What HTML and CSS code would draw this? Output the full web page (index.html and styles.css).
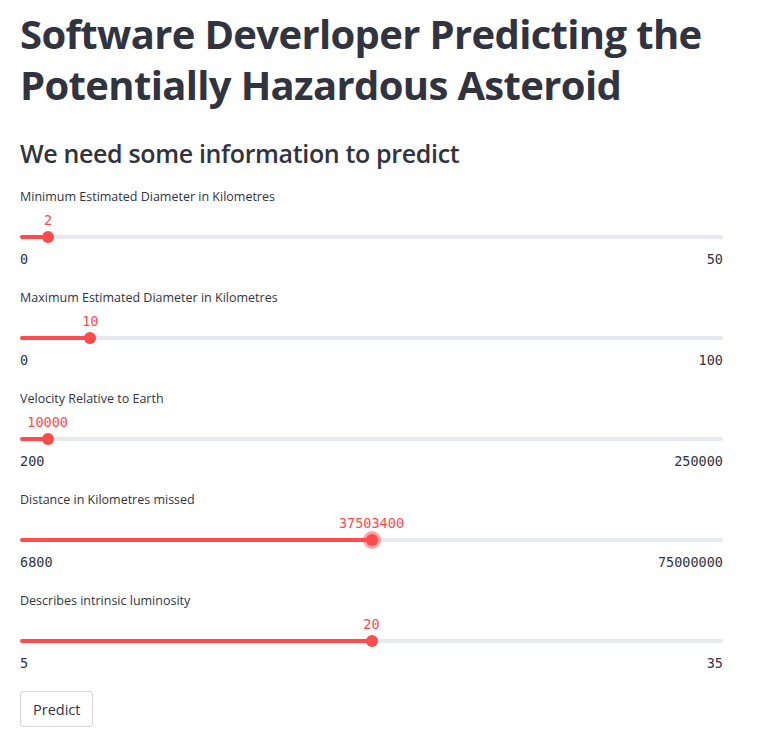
FILE: index.html
```html
<!DOCTYPE html>
<html lang="en">
<head>
<meta charset="utf-8">
<title>Hazardous Asteroid</title>
<link rel="stylesheet" href="styles.css">
</head>
<body>
<main class="main">
  <h1 class="title">Software Deverloper Predicting the Potentially Hazardous Asteroid</h1>
  <h2 class="subtitle">We need some information to predict</h2>

  <div class="fields">
    <div class="field">
      <div class="label">Minimum Estimated Diameter in Kilometres</div>
      <div class="value-row"><span class="value" style="left: 4%">2</span></div>
      <div class="track-row">
        <div class="track"><div class="fill" style="width: 4%"></div><span class="thumb" style="left: 4%"></span></div>
      </div>
      <div class="ticks"><span>0</span><span>50</span></div>
    </div>

    <div class="field">
      <div class="label">Maximum Estimated Diameter in Kilometres</div>
      <div class="value-row"><span class="value" style="left: 10%">10</span></div>
      <div class="track-row">
        <div class="track"><div class="fill" style="width: 10%"></div><span class="thumb" style="left: 10%"></span></div>
      </div>
      <div class="ticks"><span>0</span><span>100</span></div>
    </div>

    <div class="field">
      <div class="label">Velocity Relative to Earth</div>
      <div class="value-row"><span class="value" style="left: 3.923%">10000</span></div>
      <div class="track-row">
        <div class="track"><div class="fill" style="width: 3.923%"></div><span class="thumb" style="left: 3.923%"></span></div>
      </div>
      <div class="ticks"><span>200</span><span>250000</span></div>
    </div>

    <div class="field">
      <div class="label">Distance in Kilometres missed</div>
      <div class="value-row"><span class="value" style="left: 50%">37503400</span></div>
      <div class="track-row">
        <div class="track"><div class="fill" style="width: 50%"></div><span class="thumb thumb-focus" style="left: 50%"></span></div>
      </div>
      <div class="ticks"><span>6800</span><span>75000000</span></div>
    </div>

    <div class="field">
      <div class="label">Describes intrinsic luminosity</div>
      <div class="value-row"><span class="value" style="left: 50%">20</span></div>
      <div class="track-row">
        <div class="track"><div class="fill" style="width: 50%"></div><span class="thumb" style="left: 50%"></span></div>
      </div>
      <div class="ticks"><span>5</span><span>35</span></div>
    </div>

    <div class="actions">
      <button class="btn" type="button">Predict</button>
    </div>
  </div>
</main>
</body>
</html>
```

FILE: styles.css
```css
* { box-sizing: border-box; }

html, body {
  margin: 0;
  padding: 0;
  background: #ffffff;
}

body {
  font-family: "Open Sans", "Liberation Sans", sans-serif;
  color: #31333f;
}

.main {
  width: 743px;
  padding: 8px 20px 0 20px;
}

.title {
  margin: 0;
  font-size: 40px;
  line-height: 51px;
  font-weight: 700;
  letter-spacing: -0.65px;
}

.subtitle {
  margin: 26px 0 17px 0;
  font-size: 25px;
  line-height: 34px;
  font-weight: 600;
  letter-spacing: -0.35px;
}

.fields {
  display: flex;
  flex-direction: column;
  gap: 11px;
}

.field {
  display: flex;
  flex-direction: column;
}

.label {
  font-size: 12.5px;
  line-height: 20px;
  height: 20px;
}

.value-row {
  position: relative;
  height: 26px;
}

.value {
  position: absolute;
  top: 0;
  transform: translateX(-50%);
  font-family: "DejaVu Sans Mono", "Liberation Mono", monospace;
  font-size: 13.5px;
  line-height: 26px;
  color: #ff4b4b;
  white-space: nowrap;
}

.track-row {
  height: 8px;
  display: flex;
  align-items: center;
}

.track {
  position: relative;
  width: 100%;
  height: 4px;
  border-radius: 2px;
  background: #e6e9ef;
}

.fill {
  height: 4px;
  border-radius: 2px;
  background: #ff4b4b;
}

.thumb {
  position: absolute;
  top: 50%;
  width: 12px;
  height: 12px;
  border-radius: 50%;
  background: #ff4b4b;
  transform: translate(-50%, -50%);
}

.thumb-focus {
  box-shadow: 0 0 0 3px rgba(255, 75, 75, 0.5);
}

.ticks {
  display: flex;
  justify-content: space-between;
  height: 36px;
  font-family: "DejaVu Sans Mono", "Liberation Mono", monospace;
  font-size: 13.5px;
  line-height: 36px;
  color: #31333f;
}

.actions {
  margin-top: -1px;
}

.btn {
  display: inline-flex;
  align-items: center;
  justify-content: center;
  height: 36px;
  padding: 0 12px;
  border: 1px solid rgba(49, 51, 63, 0.2);
  border-radius: 4px;
  background: #ffffff;
  color: #31333f;
  font-family: "Open Sans", "Liberation Sans", sans-serif;
  font-size: 14.5px;
}
```
